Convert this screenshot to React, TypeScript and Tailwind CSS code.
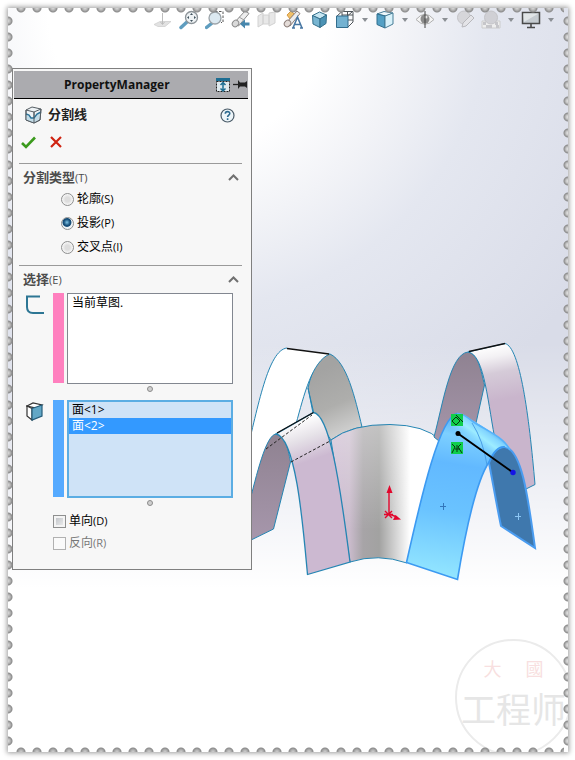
import type { ReactNode } from "react";

const Icon = ({ children }: { children: ReactNode }) => (
  <svg width="20" height="20" viewBox="0 0 20 20" fill="none" aria-hidden="true">
    {children}
  </svg>
);

const tools = [
  {
    name: "Normal to plane",
    icon: (
      <Icon>
        <path d="M1 14.500l6-3h11l-6 5H5z" fill="#e2e2e2" stroke="#cfcfcf" strokeWidth=".8" />
        <path d="M9.500 3v11M7.500 12l2 2.500 2-2.500" stroke="#bdbdbd" />
      </Icon>
    ),
  },
  {
    name: "Zoom to fit",
    icon: (
      <Icon>
        <path d="M2 17.500l6-5.500" stroke="#5f9dbf" strokeWidth="3.500" strokeLinecap="round" />
        <circle cx="12.500" cy="7.500" r="6" fill="#eef2f4" stroke="#8d9499" strokeWidth="1.300" />
        <path
          d="M12.500 3l1.500 2h-3zM12.500 12l1.500-2h-3zM8 7.500l2-1.500v3zM17 7.500l-2-1.500v3z"
          fill="#41535e"
        />
      </Icon>
    ),
  },
  {
    name: "Zoom to area",
    icon: (
      <Icon>
        <path d="M10 1.500h8v11h-2" stroke="#555" strokeDasharray="2.500 1.500" />
        <path d="M1.500 17.500l5-4" stroke="#5f9dbf" strokeWidth="3.500" strokeLinecap="round" />
        <circle cx="10" cy="8" r="6" fill="#dce9f1" stroke="#9ba3a8" strokeWidth="1.300" />
      </Icon>
    ),
  },
  {
    name: "Previous view",
    icon: (
      <Icon>
        <path d="M3 13L14 1l4 2.500L7.500 16z" fill="#ededed" stroke="#8b8b8b" />
        <ellipse cx="4.500" cy="13.500" rx="3" ry="3.500" fill="#dadada" stroke="#8b8b8b" transform="rotate(40 4.500 13.500)" />
        <path d="M8 7l5 3" stroke="#9c9c9c" />
        <path d="M9 14l5-4.500v3h4.500v3H14v3z" fill="#4787ad" />
      </Icon>
    ),
  },
  {
    name: "Section view",
    icon: (
      <Icon>
        <path d="M1 6l5-3v11l-5 3zM6 5h6v9H6zM12 3l6-1v11l-6 3z" fill="#e8e8e8" stroke="#d2d2d2" />
      </Icon>
    ),
  },
  {
    name: "Annotations",
    icon: (
      <Icon>
        <path d="M4 5l4-4 3 3-4 5z" fill="#f0c069" stroke="#d69b45" />
        <path d="M3 13L14 1l3 2.500L7 16z" fill="#eee" stroke="#8b7d78" />
        <ellipse cx="4.500" cy="13.500" rx="3" ry="3.500" fill="#e4dcd8" stroke="#8b7d78" transform="rotate(40 4.500 13.500)" />
        <path d="M10 18l4.500-11L19 18M11.500 14.500h6M9 18h3M17 18h3" stroke="#4877a3" strokeWidth="1.600" />
      </Icon>
    ),
  },
  {
    name: "View cube",
    icon: (
      <Icon>
        <path d="M10.500 2l7 3-6.500 4-7.500-3.500z" fill="#c6e6f2" stroke="#35708c" />
        <path d="M3.500 5.500L11 9v8.500L4 14z" fill="#78b5d1" stroke="#35708c" />
        <path d="M11 9l6.500-4-.5 8.500-6 4z" fill="#4c93b5" stroke="#35708c" />
      </Icon>
    ),
  },
  {
    name: "View orientation",
    menu: true,
    icon: (
      <Icon>
        <path d="M7 6V1.500h11V12l-5 5M12.500 2v5M7 5h11M13 10h5M2 6l5-4.500M12.500 6l5-4.500" stroke="#4e5459" />
        <path d="M1.500 6h11.500v11.500H1.500z" fill="#74b2d1" stroke="#326d8d" />
      </Icon>
    ),
  },
  {
    name: "Display style",
    menu: true,
    icon: (
      <Icon>
        <path d="M2 4l7-2.500L18 3l-7 3z" fill="#edf7fb" stroke="#477c96" />
        <path d="M2 4l8 2v12l-8-3.500z" fill="#53a0c5" stroke="#316f8e" />
        <path d="M10 6l8-3v11l-8 4z" fill="#d8f1fa" stroke="#477c96" />
      </Icon>
    ),
  },
  {
    name: "Hide or show items",
    menu: true,
    icon: (
      <Icon>
        <path d="M1 9.500Q10-1 19 9.500 10 19 1 9.500z" fill="#f4f4f4" stroke="#b0b0b0" />
        <circle cx="10" cy="9" r="4.500" fill="#8c8c8c" />
        <circle cx="11" cy="7" r="1.500" fill="#e8e8e8" />
        <path d="M10 1v17" stroke="#444" />
      </Icon>
    ),
  },
  {
    name: "Edit appearance",
    icon: (
      <Icon>
        <circle cx="9" cy="7.500" r="6.500" fill="#d6d6da" stroke="#c4c4c8" />
        <path d="M8 13l8-8 3 3-8 8-4 1z" fill="#e4e4e8" stroke="#b8b8bc" />
      </Icon>
    ),
  },
  {
    name: "Apply scene",
    menu: true,
    icon: (
      <Icon>
        <path d="M1 11h18v7H1z" fill="#eee" stroke="#ccc" />
        <path d="M2 12h3v3H2zM8 15h3v3H8zM14 12h3v3h-3zM5 15h3v3H5zM15 15h3v3h-3z" fill="#c6c6ca" />
        <circle cx="10" cy="7.500" r="6.500" fill="#d0d0d5" stroke="#c4c4c8" />
      </Icon>
    ),
  },
  {
    name: "View settings",
    menu: true,
    icon: (
      <Icon>
        <path d="M1.500 2.500h17v11h-17z" fill="#c5cbd0" stroke="#4a4a4a" strokeWidth="1.500" />
        <path d="M2.500 3.500h15L3 12z" fill="#e1e5e7" />
        <path d="M10 14v3M6 17.500h8" stroke="#4a4a4a" strokeWidth="1.600" />
      </Icon>
    ),
  },
];

const splitTypes = [
  { id: "silhouette", label: "轮廓", hotkey: "(S)" },
  { id: "projection", label: "投影", hotkey: "(P)" },
  { id: "intersection", label: "交叉点", hotkey: "(I)" },
];

const faces = ["面<1>", "面<2>"];

const Toolbar = () => (
  <nav className="flex h-6 items-center justify-end pr-[10px]">
    {tools.map((tool) => (
      <div key={tool.name} className="flex">
        <button aria-label={tool.name} className="flex w-[26px] justify-center">
          {tool.icon}
        </button>
        {tool.menu && (
          <button aria-label={`${tool.name} menu`} className="flex w-[14px] items-center justify-center">
            <svg width="6" height="4" viewBox="0 0 6 4" aria-hidden="true">
              <path d="M0 0h6L3 4z" fill="#8b8f94" />
            </svg>
          </button>
        )}
      </div>
    ))}
  </nav>
);

const SectionTitle = ({ text, hotkey }: { text: string; hotkey: string }) => (
  <div className="flex h-7 items-center justify-between border-t border-[#9a9a9a] pl-1 pr-[3px]">
    <h3 className="text-[13px] font-bold text-[#4c4c4c]">
      {text}
      <span className="text-[11px] font-normal">({hotkey})</span>
    </h3>
    <button aria-label={`Collapse ${text}`}>
      <svg width="11" height="7" viewBox="0 0 11 7" fill="none" aria-hidden="true">
        <path d="M1 6l4.500-4.500L10 6" stroke="#707070" strokeWidth="2" />
      </svg>
    </button>
  </div>
);

const Grip = () => (
  <div className="flex h-[9px] items-center justify-center">
    <span className="size-[6px] rounded-full border border-[#8c8c8c] bg-[#cfcfcf]" />
  </div>
);

const PropertyPanel = () => (
  <aside className="w-60 shrink-0 border border-[#7f7f7f] bg-[#f7f7f7] pb-[15px] text-black">
    <header className="ml-px mr-[3px] mt-[2px] flex h-7 items-center border-b border-black bg-[#ababaf]">
      <h1 className="flex-1 pl-[50px] text-xs font-bold text-[#111]">PropertyManager</h1>
      <svg width="32" height="16" viewBox="0 0 32 16" fill="none" aria-hidden="true">
        <path d="M0 1h14v3H0z" fill="#1d6d92" />
        <path d="M.5 4.500h13v10H.5z" fill="#dfe9ee" stroke="#222" strokeDasharray="2 1" />
        <path d="M7 6v8M4.500 8L7 5.500 9.500 8M4.500 11.500L7 14l2.500-2.500" stroke="#1d6d92" strokeWidth="1.500" />
        <path d="M17 7.500h5" stroke="#222" strokeWidth="1.300" />
        <path d="M22 3l2 2.500h5L31 4v7l-2-1.500h-5L22 12z" fill="#222" />
      </svg>
    </header>

    <div className="pl-[6px] pr-[9px]">
      <div className="flex h-8 items-center pl-[6px] pr-[7px]">
        <svg width="17" height="18" viewBox="0 0 17 18" fill="none" aria-hidden="true">
          <path d="M1 4l6-3 9 2-1 11-6 3-8-3z" fill="#eef3f6" stroke="#555d63" />
          <path d="M1 4l8 2 7-3M9 6v11" stroke="#555d63" />
          <path d="M1 9l3 1 2 2 3 0 3-4 3-1-.5 6L9 17l-8-3z" fill="#c3dce8" />
          <path d="M1 8l3 1 2 3h3l3-4 4-2" stroke="#2a7399" strokeWidth="1.400" />
          <path d="M9 6v11M1 4v10l8 3 6-3 1-11" stroke="#555d63" />
        </svg>
        <h2 className="flex-1 pl-[6px] text-[13px] font-bold text-[#222]">分割线</h2>
        <button aria-label="Help">
          <svg width="15" height="15" viewBox="0 0 15 15" fill="none" aria-hidden="true">
            <circle cx="7.500" cy="7.500" r="6.500" fill="#edf5f9" stroke="#4a5b68" strokeWidth="1.200" />
            <path d="M5.300 5.800c0-3 4.600-2.800 4.500-.2 0 1.500-2.200 1.700-2.200 3.500M7.600 10.300v1.600" stroke="#2e6b90" strokeWidth="1.600" />
          </svg>
        </button>
      </div>
      <div className="flex h-8 items-start gap-[14px] pl-[2px] pt-[5px]">
        <button aria-label="OK">
          <svg width="15" height="13" viewBox="0 0 15 13" fill="none" aria-hidden="true">
            <path d="M1 7l4 4L14 1.500" stroke="#3b9a1d" strokeWidth="2.600" />
          </svg>
        </button>
        <button aria-label="Cancel">
          <svg width="12" height="12" viewBox="0 0 12 12" fill="none" aria-hidden="true">
            <path d="M1 1l10 10M11 1L1 11" stroke="#cf2311" strokeWidth="2.200" />
          </svg>
        </button>
      </div>

      <SectionTitle text="分割类型" hotkey="T" />
      <fieldset className="mb-[6px] pl-[42px]">
        {splitTypes.map((type) => (
          <label key={type.id} className="flex h-6 items-center text-xs first:-mt-1">
            <input
              type="radio"
              name="split-type"
              defaultChecked={type.id === "projection"}
              className="mr-[3px] size-[13px] appearance-none rounded-full border border-[#8e8f8f] bg-[radial-gradient(circle,#ddd_30%,#f4f4f4_65%)] checked:bg-[radial-gradient(circle_at_45%_40%,#7fc4e6_0%,#174f7a_35%,#174f7a_45%,#eef3f6_55%)]"
            />
            {type.label}
            <span className="text-[11px]">{type.hotkey}</span>
          </label>
        ))}
      </fieldset>

      <SectionTitle text="选择" hotkey="E" />
      <div className="flex pr-[9px]">
        <svg className="ml-[6px] mt-[2px] w-[21px]" width="21" height="20" viewBox="0 0 21 20" fill="none" aria-hidden="true">
          <path d="M15 1.500H2V12q0 6 6 6h11" stroke="#2d7694" strokeWidth="2" />
        </svg>
        <div className="ml-[7px] mr-[3px] h-[90px] w-[11px] bg-[#ff80bf]" />
        <div className="flex-1">
          <ul role="listbox" aria-label="Sketch" className="h-[91px] border border-[#828790] bg-white pl-1 pt-px text-xs">
            <li role="option" aria-selected="false" className="h-4 leading-4">
              当前草图.
            </li>
          </ul>
          <Grip />
        </div>
      </div>

      <div className="mt-[7px] flex pr-[9px]">
        <svg className="ml-[7px] mt-[2px] w-5" width="20" height="20" viewBox="0 0 20 20" fill="none" aria-hidden="true">
          <path d="M1 4l6-3 9 2-6 3z" fill="#fff" stroke="#333" strokeWidth="1.200" />
          <path d="M1 4l5 2.500V18l-5-4z" fill="#fff" stroke="#333" strokeWidth="1.200" />
          <path d="M6 6.500L16 3v11L6 18z" fill="#62a7c6" stroke="#255d7b" strokeWidth="1.200" />
        </svg>
        <div className="ml-[7px] mr-[3px] h-[97px] w-[11px] bg-[#55aaff]" />
        <div className="flex-1">
          <ul role="listbox" aria-label="Faces" className="h-[98px] border-2 border-[#5bade3] bg-[#cfe3f7] text-xs">
            {faces.map((face, index) => (
              <li
                key={face}
                role="option"
                aria-selected={index === 1}
                className="h-4 pl-[3px] leading-4 aria-selected:bg-[#3399ff] aria-selected:text-white"
              >
                {face}
              </li>
            ))}
          </ul>
          <Grip />
        </div>
      </div>

      <div className="mt-[3px] flex flex-col pl-[34px] text-xs">
        <label className="flex h-[22px] items-center">
          <input
            type="checkbox"
            className="mr-[3px] size-[13px] appearance-none border border-[#8e8f8f] bg-[linear-gradient(135deg,#b9bdc2,#f2f2f2)] shadow-[inset_0_0_0_2px_#f4f4f4]"
          />
          单向<span className="text-[11px]">(D)</span>
        </label>
        <label className="flex h-[22px] items-center text-[#777]">
          <input type="checkbox" disabled className="mr-[3px] size-[13px] appearance-none border border-[#b1b1b1] bg-[#fafafa]" />
          反向<span className="text-[11px]">(R)</span>
        </label>
      </div>
    </div>
  </aside>
);

const Model = () => (
  <svg className="h-auto w-full" viewBox="252 68 316 530" fill="none" role="img" aria-label="Model">
    <defs>
      <linearGradient id="inner" x1="320" y1="370" x2="350" y2="440" gradientUnits="userSpaceOnUse">
        <stop stopColor="#a3a3a2" />
        <stop offset=".5" stopColor="#aeaeac" />
        <stop offset="1" stopColor="#d9d9d9" />
      </linearGradient>
      <linearGradient id="hub" x1="331" y1="0" x2="438" y2="0" gradientUnits="userSpaceOnUse">
        <stop stopColor="#ccb9d0" />
        <stop offset=".17" stopColor="#cbbccd" />
        <stop offset=".3" stopColor="#a7a4a7" />
        <stop offset=".45" stopColor="#a2a2a1" />
        <stop offset=".6" stopColor="#d2d2d2" />
        <stop offset=".74" stopColor="#fff" />
      </linearGradient>
      <linearGradient id="hubTop" x1="0" y1="425" x2="0" y2="530" gradientUnits="userSpaceOnUse">
        <stop stopColor="#fff" stopOpacity=".35" />
        <stop offset="1" stopColor="#fff" stopOpacity="0" />
      </linearGradient>
      <linearGradient id="frontBand" x1="298" y1="420" x2="312" y2="460" gradientUnits="userSpaceOnUse">
        <stop stopColor="#fff" />
        <stop offset=".45" stopColor="#e6e2e8" />
        <stop offset="1" stopColor="#ccb9d1" />
      </linearGradient>
      <linearGradient id="backBand" x1="490" y1="346" x2="500" y2="400" gradientUnits="userSpaceOnUse">
        <stop stopColor="#fff" />
        <stop offset=".2" stopColor="#f3f1f4" />
        <stop offset=".5" stopColor="#d5cbd8" />
        <stop offset="1" stopColor="#c9b5cc" />
      </linearGradient>
      <linearGradient id="shade" x1="0" y1="0" x2="0" y2="1">
        <stop stopColor="#8f8291" />
        <stop offset="1" stopColor="#a797ac" />
      </linearGradient>
      <linearGradient id="blue" x1="455" y1="415" x2="430" y2="575" gradientUnits="userSpaceOnUse">
        <stop stopColor="#55aef4" />
        <stop offset=".12" stopColor="#7dd0ff" />
        <stop offset=".3" stopColor="#62b9ff" />
        <stop offset=".6" stopColor="#6ac3ff" />
        <stop offset="1" stopColor="#93e6ff" />
      </linearGradient>
      <linearGradient id="fold" x1="466" y1="446" x2="485" y2="420" gradientUnits="userSpaceOnUse">
        <stop stopColor="#64bcff" stopOpacity="0" />
        <stop offset=".5" stopColor="#9decff" />
        <stop offset=".72" stopColor="#83d5ff" />
        <stop offset="1" stopColor="#3e91e0" />
      </linearGradient>
    </defs>

    {/* rear left arch */}
    <path d="M330 354C347 362 355 398 362 427Q345 430 331 440L313 413 308 388Q315 356 330 354z" fill="url(#inner)" stroke="#2585b3" />
    <path d="M246 455C258 407 268 350 287 348L330 354C312 361 304 395 296 424L277 434 252 495H240z" fill="#fff" />
    <path d="M246 455C258 407 268 350 287 348M330 354C312 361 304 395 296 424M308 388L314 414" stroke="#2585b3" />
    <path d="M287 348.500L329 354" stroke="#111" strokeWidth="1.300" />

    {/* hub */}
    <path d="M331 440Q352 424 390 424.500 425 425 440 440L407 563Q378 553 350 562z" fill="url(#hub)" />
    <path d="M331 440Q352 424 390 424.500 425 425 440 440L407 563Q378 553 350 562z" fill="url(#hubTop)" stroke="#2585b3" />

    {/* front left arch */}
    <path d="M248 508C257 473 266 435 276 434 284 434 288 447 290.500 462L273.500 529 245 543z" fill="url(#shade)" stroke="#2585b3" />
    <path d="M276 434L313.500 412.500C329 415 339 476 350 562L307.500 574.500C303 525 296 438 276 434z" fill="url(#frontBand)" stroke="#2585b3" strokeWidth="1.300" />
    <path d="M277 433L313.500 412.500" stroke="#111" strokeWidth="1.300" />
    <path d="M266 449L312 415M291 462L331 440.500" stroke="#222" strokeDasharray="3 2" />

    {/* rear right arch */}
    <path d="M434 437C443 404 450 354 468 352 478 353 481 371 484.500 385L474 432 450 450z" fill="url(#shade)" stroke="#2585b3" />
    <path d="M468 352L505 343.500C520 347 529 415 535 484.500L526 489 496 444C488 407 485 354 468 352z" fill="url(#backBand)" stroke="#2585b3" />
    <path d="M469 351.500L505 343.500" stroke="#111" strokeWidth="1.400" />

    {/* selected faces */}
    <path d="M489 463Q495 446 505 447C523 450 529 506 535 548L501 526C497 507 492 478 489 463z" fill="#3f78ad" stroke="#4a9cf0" strokeWidth="2" />
    <path d="M457 413.500C440 417 422 493 406.500 562.500L457.500 579.500C466 528 476 482 489 462 494 450 499 446 506 447Q512 450 509 447C502 438 478 424 464 415z" fill="url(#blue)" />
    <path d="M457 413.500L448 430 485 466Q494 447 506 447 509 448 507 445C502 437 478 424 464 415z" fill="url(#fold)" />
    <path d="M457 413.500C440 417 422 493 406.500 562.500L457.500 579.500C466 528 476 482 489 462 494 450 499 446 505 447" stroke="#3c9af2" strokeWidth="1.600" />
    <path d="M457 413.500Q463 413 472 421C485 430 503 436 510 450" stroke="#56b2fb" strokeWidth="1.600" />
    <path d="M472 423Q483 440 487 465" stroke="#4a9fe6" />

    <path d="M440 506.500h6M443.500 503v7" stroke="#3276bb" />
    <path d="M515 516.500h6M518.500 513v7" stroke="#8cc6f4" />

    {/* sketch line and its relations */}
    <path d="M451 414h12v12h-12zM451 442h12v12h-12z" fill="#0fce4b" />
    <path d="M452 421l4-4 4 4-4 4-4-4M456 415l7 7M452 444l3 3-3 6M461 444l-3 3 4 6M457 445v2M455 449h5M457 447v5" stroke="#08320f" />
    <path d="M458 433.500L513 472.500" stroke="#000" strokeWidth="2" />
    <circle cx="458" cy="433.500" r="2.500" fill="#000" />
    <circle cx="513" cy="472.500" r="2.700" fill="#1414e6" />

    {/* origin */}
    <path d="M389 514V490M389 514l8 3M385 511l7 7M392 511l-7 7M384 514.500h9" stroke="#e2062c" strokeWidth="1.400" />
    <path d="M389.500 485l3 8h-6zM401 519.500l-8 .5 2.500-5z" fill="#e2062c" />
  </svg>
);

const Watermark = () => (
  <div className="absolute -bottom-1 -right-1 flex size-[117px] flex-col items-center rounded-full border-2 border-[#ebebeb] pt-[14px] text-center font-['Noto_Sans_CJK_SC',sans-serif]">
    <div className="flex gap-6 text-lg leading-[27px] text-[#f8dfe0]">
      <span>大</span>
      <span>國</span>
    </div>
    <div className="whitespace-nowrap text-[35px] leading-[52px] text-[#e6e6e6]">工程师</div>
  </div>
);

// perforated stamp border
const Perforation = () => (
  <div className="pointer-events-none absolute inset-0" aria-hidden="true">
    <div className="absolute inset-x-1 top-0 h-[5px] bg-[radial-gradient(circle_at_9px_0,#dcdcdc_0,#bcbcbc_2px,#8c8c8c_4px,transparent_5px)] bg-[length:16px_5px] bg-repeat-x" />
    <div className="absolute inset-x-1 bottom-0 h-[5px] bg-[radial-gradient(circle_at_9px_100%,#cfcfcf_0,#b4b4b4_2px,#8c8c8c_4px,transparent_5px)] bg-[length:16px_5px] bg-repeat-x" />
    <div className="absolute inset-y-1 left-0 w-[5px] bg-[radial-gradient(circle_at_0_9px,#dcdcdc_0,#bcbcbc_2px,#8c8c8c_4px,transparent_5px)] bg-[length:5px_16px] bg-repeat-y" />
    <div className="absolute inset-y-1 right-0 w-[5px] bg-[radial-gradient(circle_at_100%_9px,#e4e4e4_0,#c8c8c8_2px,#8c8c8c_4px,transparent_5px)] bg-[length:5px_16px] bg-repeat-y" />
  </div>
);

export default function App() {
  return (
    <div className="flex min-h-screen bg-white py-2 pl-2 pr-[7px] font-['Open_Sans','Noto_Sans_CJK_SC',sans-serif]">
      <main className="relative flex-1 overflow-hidden bg-[linear-gradient(to_bottom,transparent_45%,#fff_78%),radial-gradient(circle_at_180px_0,#fff_140px,#f2f3f7_220px,#e4e7f0_300px,#d9dce8_480px)] shadow-[0_0_5px_1px_#9a9a9a]">
        <Toolbar />
        <div className="mt-9 flex items-start pl-1">
          <PropertyPanel />
          <div className="min-w-0 flex-1">
            <Model />
          </div>
        </div>
        <Watermark />
        <Perforation />
      </main>
    </div>
  );
}
